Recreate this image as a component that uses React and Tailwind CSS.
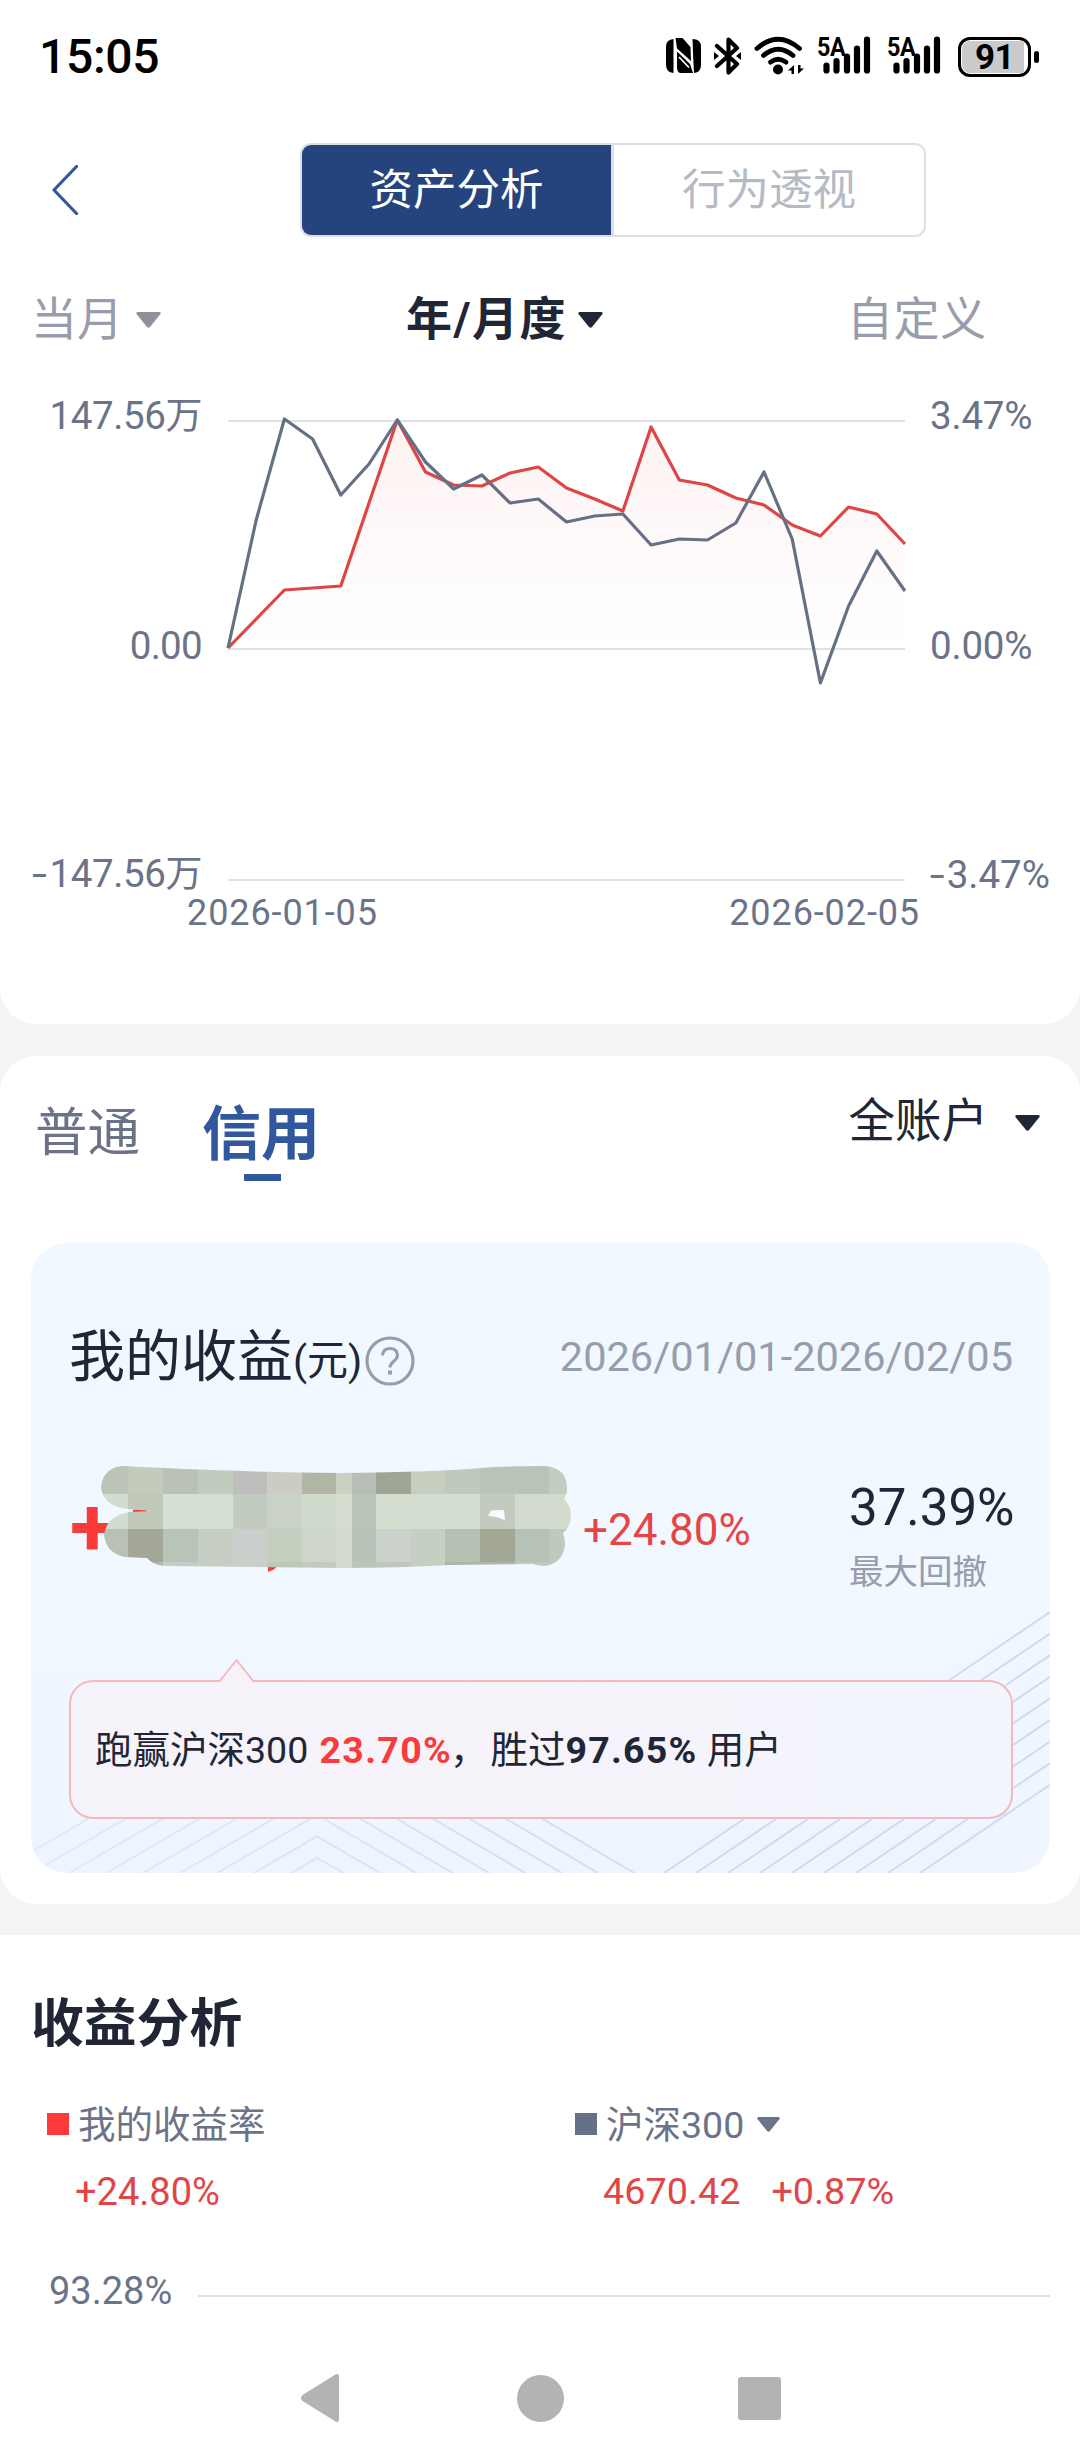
import React from 'react';

const STEP = 677 / 24;

const mine = [
  648, 619, 590, 588, 586, 503, 420, 472, 485, 486, 473, 467, 488, 499, 511, 427, 480, 485, 498, 505, 525, 536, 507,
  514, 544,
];

const index300 = [
  648, 520, 419, 439, 495, 464, 420, 462, 489, 475, 503, 499, 522, 516, 514, 545, 539, 540, 523, 472, 539, 683, 606,
  551, 591,
];

function toPoints(values) {
  return values.map((y, i) => `${(i * STEP).toFixed(1)},${y - 395}`).join(' ');
}

const mosaicCols = [99, 128, 162.5, 197.5, 232.5, 267, 302, 336, 352, 376, 411, 445, 480, 515, 549, 574];
const mosaicRows = [1462, 1493.5, 1528.5, 1562, 1572];
const mosaicColors = [
  ['#bbc4b7', '#c4cbbd', '#b9c2b5', '#c1ccbf', '#bcbfbb', '#cccbc4', '#b1b5a5', '#ccd0c1', '#b6beb6', '#9fa594', '#c6cec0', '#c0c9bd', '#bac3b7', '#b9c3b7', '#c3ccc0'],
  ['#d2ddd0', '#c0c8ba', '#d5dfd2', '#d5dfd2', '#c2cbbf', '#c9d2c4', '#d0dacd', '#d5ddd0', '#bac4b8', '#d3ddd0', '#d3ddd0', '#d2dfd2', '#c3cbbf', '#d3dbce', '#d3dbce'],
  ['#b8c1b4', '#a2a797', '#b7c4b7', '#c6cec3', '#cacfcb', '#c4cfbf', '#cdd6c9', '#d3dbd0', '#b8c2b6', '#cbd1cb', '#c6d0c2', '#b7c1b3', '#a3a896', '#b5c2b5', '#bfcabe'],
  ['#b8c1b4', '#b3b8aa', '#c6cec3', '#c6cec3', '#c9cfc4', '#bfc7b8', '#c3cbbe', '#d3dbd0', '#bcc5b9', '#bfc7bc', '#c6cec0', '#b0b6a6', '#b0b6a6', '#c0c9bd', '#bfcabe'],
];

function Caret({ className = '', width = 25, height = 16 }) {
  return (
    <svg className={className} width={width} height={height} viewBox="0 0 25 16" preserveAspectRatio="none">
      <path d="M1.5 0h22q2 .5 .8 2.3L14 15q-1.5 1.6-3 0L.7 2.3Q-.5 .5 1.5 0z" fill="currentColor" />
    </svg>
  );
}

function Signal() {
  return (
    <div className="relative h-[40px] w-[58px]">
      <div className="absolute top-[-1px] left-[2px] origin-left scale-x-[0.900] text-[26px] leading-[24px] font-bold tracking-[-0.500px]">
        5A
      </div>
      <svg width="58" height="40" viewBox="0 0 58 40">
        <path
          d="M11.500 29.500v5M21.500 25v9.500M32 20.500v14M42 12.500v22M52 3.500v31"
          stroke="#000"
          strokeWidth="6.2"
          strokeLinecap="round"
        />
      </svg>
    </div>
  );
}

function StatusBar() {
  return (
    <div className="flex h-[112px] items-center pl-[39px] text-black">
      <div className="w-[627px] pt-[2px] text-[48px] leading-none font-medium tracking-[-0.300px]">15:05</div>

      <svg width="35" height="36" viewBox="0 0 35 36">
        <path d="M7.500 1v34Q0 34 0 27V8Q0 2 7.500 1zM9.500 0h7l8 9 .5 14L11 10.500zM26.500 1Q35 1 35 9v18q0 7-7 8-1-17-1.500-34zM11 13.500l13 12.500 3 9H14q-3-1-3-6z" fill="#000" />
        <path d="M13 19l10 10.500" stroke="#fff" strokeWidth="1.800" />
      </svg>

      <svg className="ml-[13px]" width="27" height="38" viewBox="0 0 27 38">
        <path d="M3 9l20 18-8.500 8.500V2.500L23 11 3 29" fill="none" stroke="#000" strokeWidth="4.200" strokeLinejoin="round" strokeLinecap="round" />
        <path d="M0 15l5 4-5 4zM27 15l-5 4 5 4z" fill="#000" />
      </svg>

      <svg className="ml-[13px]" width="50" height="40" viewBox="0 0 50 40">
        <g fill="none" stroke="#000" strokeWidth="4.800" strokeLinecap="round">
          <path d="M3 12.500q21-18.500 42.500 0" />
          <path d="M9.500 19.500q14.500-12.500 29.500 0" />
          <path d="M16.500 26.200q7.500-6 15.500 0" />
        </g>
        <circle cx="24" cy="33.500" r="5" fill="#000" />
        <path d="M34 34.500l6-5.500v9h-2.500v-3.500zM50 32.500L44 38v-9h2.500v3.500z" fill="#000" />
      </svg>

      <div className="ml-[11px] flex gap-[12px]">
        <Signal />
        <Signal />
      </div>

      <div className="ml-[15px] flex items-center pt-[2px]">
        <div className="flex h-[40px] w-[73px] rounded-[12px] border-[3.5px] border-black p-px">
          <div className="flex w-[62px] items-center justify-center rounded-l-[8px] bg-[#cbcbcb] pl-[3px] text-[35px] leading-none font-bold tracking-[-0.500px]">
            91
          </div>
        </div>
        <div className="ml-[3px] h-[12px] w-[5px] rounded-full bg-black" />
      </div>
    </div>
  );
}

function Header() {
  return (
    <div className="flex h-[155px] items-center pl-[52px]">
      <svg width="26" height="50" viewBox="0 0 26 50">
        <path d="M24.500 1.500L2 25l22.500 23.500" fill="none" stroke="#31589f" strokeWidth="3.200" strokeLinecap="round" strokeLinejoin="round" />
      </svg>
      <div className="ml-[222px] flex h-[94px] w-[626px] overflow-hidden rounded-[11px] border-2 border-[#dcdfe6] text-[43.5px] leading-none">
        <div className="flex w-[309px] items-center justify-center bg-[#25437c] pt-[2px] text-white">资产分析</div>
        <div className="flex flex-1 items-center justify-center border-l-3 border-[#dcdfe6] pt-[2px] text-[#b6bac5]">行为透视</div>
      </div>
    </div>
  );
}

function FilterRow() {
  return (
    <div className="flex h-[104px] items-center pl-[31px] text-[46px] leading-none text-[#979dac]">
      <div className="w-[93px]">当月</div>
      <Caret className="mt-[2px] ml-[12px] text-[#8f929b]" />
      <div className="ml-[245px] w-[163px] font-bold tracking-[1.500px] text-[#212637]">年/月度</div>
      <Caret className="mt-[2px] ml-[9px] text-[#212637]" />
      <div className="ml-[244px] tracking-[0.600px]">自定义</div>
    </div>
  );
}

function TrendChart() {
  return (
    <div className="mt-[24px] text-[#6b7388]">
      <div className="flex h-[499px] text-[38.500px] leading-[42px]">
        <div className="flex w-[202px] flex-col justify-between text-right whitespace-nowrap">
          <div className="tracking-[-0.400px]">147.56<span className="text-[37px]">万</span></div>
          <div className="tracking-[-0.700px]">0.00</div>
          <div className="-mb-[2px] tracking-[-0.400px]"><span className="mr-[5px] inline-block scale-x-[1.400]">-</span>147.56<span className="text-[37px]">万</span></div>
        </div>
        <svg className="ml-[26px] overflow-visible" width="677" height="499" viewBox="0 0 677 499">
          <defs>
            <linearGradient id="area" x1="0" y1="0" x2="0" y2="1">
              <stop offset="0" stopColor="#e94848" stopOpacity="0.07" />
              <stop offset="1" stopColor="#e94848" stopOpacity="0" />
            </linearGradient>
          </defs>
          <path d="M0 26h677M0 254h677M0 485h677" stroke="#dfe2e4" strokeWidth="2" />
          <polygon points={`${toPoints(mine)} 677,253 0,253`} fill="url(#area)" />
          <polyline points={toPoints(mine)} fill="none" stroke="#df4545" strokeWidth="3.200" strokeLinejoin="round" />
          <polyline points={toPoints(index300)} fill="none" stroke="#667085" strokeWidth="3.200" strokeLinejoin="round" />
        </svg>
        <div className="ml-[25px] flex flex-col justify-between whitespace-nowrap">
          <div className="tracking-[-0.200px]">3.47%</div>
          <div className="tracking-[-0.200px]">0.00%</div>
          <div className="-mb-[2px]"><span className="mr-[4px] ml-[2px] inline-block scale-x-[1.400]">-</span>3.47%</div>
        </div>
      </div>
      <div className="flex justify-between pr-[160px] pl-[187px] text-[36px] leading-[38px] tracking-[0.900px]">
        <div>2026-01-05</div>
        <div>2026-02-05</div>
      </div>
    </div>
  );
}

function CardPattern() {
  return (
    <svg className="absolute inset-0" width="1019" height="630" viewBox="31 1243 1019 630" fill="none">
      <defs>
        <linearGradient id="chevron" gradientUnits="userSpaceOnUse" x1="31" y1="0" x2="640" y2="0">
          <stop offset="0" stopColor="#e0eaf8" />
          <stop offset="0.5" stopColor="#d8e5f7" />
          <stop offset="1" stopColor="#cbdff6" />
        </linearGradient>
      </defs>
      {Array.from({ length: 9 }, (_, k) => (
        <path
          key={k}
          d={`M${291 - 37 * k} 1873L317 ${1858 - 21.5 * k}L${344 + 36.3 * k} 1873`}
          stroke="url(#chevron)"
          strokeWidth="2"
        />
      ))}
      {Array.from({ length: 9 }, (_, k) => (
        <path key={k} d={`M1050 ${1612 + 21.6 * k}L${664 + 32 * k} 1873`} stroke="#c8dcf5" strokeWidth="2" />
      ))}
    </svg>
  );
}

// censored amount
function HiddenAmount() {
  return (
    <div className="relative h-[140px] w-[512px]">
      <div className="pt-[26px] pl-px text-[82px] leading-none font-bold text-[#fb3a3a]">+</div>
      <svg className="absolute top-0 left-0" width="511" height="120" viewBox="69 1460 511 120">
        <defs>
          <clipPath id="smear">
            <path d="M122 1466Q230 1472 340 1473Q440 1472 480 1468Q510 1466 545 1466Q567 1468 567 1488Q567 1495 564 1499Q571 1506 571 1515Q571 1527 563 1533Q565 1538 565 1545Q563 1563 545 1566Q538 1566 533 1564L450 1565Q400 1568 340 1568L165 1566Q153 1565 147 1558L125 1557Q106 1553 104 1535Q106 1516 130 1512L152 1511L127 1509Q103 1506 101 1487Q103 1468 122 1466z" />
          </clipPath>
        </defs>
        <path d="M133 1509.500h14v2.500h-14zM268 1566h9l-3 3.500-6 2.500z" fill="#f23c3c" />
        <g clipPath="url(#smear)" shapeRendering="crispEdges">
          {mosaicColors.map((row, r) =>
            row.map((fill, c) => (
              <rect
                key={`${r}-${c}`}
                x={mosaicCols[c]}
                y={mosaicRows[r]}
                width={mosaicCols[c + 1] - mosaicCols[c] + 0.5}
                height={mosaicRows[r + 1] - mosaicRows[r] + 0.5}
                fill={fill}
              />
            ))
          )}
        </g>
        <path d="M491 1510.500l13-.500 1 10.500q-6-4-17-4.500z" fill="#f8fcff" />
      </svg>
    </div>
  );
}

function IncomeCard() {
  return (
    <div className="relative ml-[31px] h-[630px] w-[1019px] overflow-hidden rounded-[36px] bg-gradient-to-b from-[#f2f8ff] via-[#f1f8ff] to-[#eef5ff]">
      <CardPattern />

      <div className="relative pr-[37px] pl-[38px]">
        <div className="mt-[70px] flex h-[84px] items-center justify-between">
          <div className="flex items-center leading-none text-[#212637]">
            <span className="mt-[3px] text-[56px]">我的收益</span>
            <span className="mt-[13px] text-[41px]">(元)</span>
            <svg className="mt-[12px] ml-[3px]" width="50" height="50" viewBox="0 0 50 50" fill="none" stroke="#979dac">
              <circle cx="25" cy="25" r="23" strokeWidth="3.200" />
              <path d="M17.500 19.500q.5-7 7.500-7t7.500 6.500q0 3.500-4 6.500-3.500 3-3.500 6" strokeWidth="3" />
              <path d="M25 34.500v4" strokeWidth="4" />
            </svg>
          </div>
          <div className="mt-[3px] text-[41.500px] leading-none text-[#979dac]">2026/01/01-2026/02/05</div>
        </div>

        <div className="mt-[63px] flex h-[140px]">
          <HiddenAmount />
          <div className="mt-[48px] ml-[2px] text-[44px] leading-none text-[#e54545]">+24.80%</div>
          <div className="ml-auto w-[164px] whitespace-nowrap">
            <div className="mt-[22px] text-[51px] leading-none text-[#212637]">37.39%</div>
            <div className="mt-[22px] text-[34.500px] leading-none text-[#979dac]">最大回撤</div>
          </div>
        </div>

        <div className="relative mt-[80px] flex h-[139px] w-[944px] items-center rounded-[24px] border-2 border-[#f5b8bc] bg-gradient-to-r from-[#f6f2f9] via-[#f6f3f9] to-[#f1f6fe] pt-[2px] pl-[24px] text-[37.500px] leading-none whitespace-pre text-[#212637]">
          <svg className="absolute -top-[24px] left-[147px]" width="38" height="25" viewBox="0 0 38 25">
            <path d="M1 24L18.500 2 36 24v1H1z" fill="#f6f2f9" />
            <path d="M1 24L18.500 2 36 24" fill="none" stroke="#f5b8bc" strokeWidth="2" strokeLinejoin="round" />
          </svg>
          <span>跑赢沪深300 </span>
          <span className="ml-[2px] font-bold tracking-[1.300px] text-[#f83c3c]">23.70%</span>
          <span className="-ml-[2px]">，</span>
          <span className="ml-[3px]">胜过</span>
          <span className="font-bold tracking-[1.200px]">97.65%</span>
          <span> 用户</span>
        </div>
      </div>
    </div>
  );
}

function AccountSection() {
  return (
    <div className="mt-[32px] h-[848px] rounded-[36px] bg-white">
      <div className="flex h-[187px] leading-none">
        <div className="mt-[51px] ml-[35px] text-[52.500px] text-[#6b7388]">普通</div>
        <div className="mt-[49px] ml-[62px] flex flex-col items-center">
          <div className="text-[59px] font-bold text-[#31589f]">信用</div>
          <div className="mt-[10px] ml-[2px] h-[7px] w-[37px] bg-[#31589f]" />
        </div>
        <div className="mt-[42px] mr-[40px] ml-auto flex h-[46px] items-center text-[46.500px] text-[#212637]">
          全账户
          <Caret className="mt-[3px] ml-[27px]" />
        </div>
      </div>
      <IncomeCard />
    </div>
  );
}

function AnalysisSection() {
  return (
    <div className="mt-[31px] h-[509px] bg-white">
      <div className="flex h-[176px] items-center pt-[3px] pl-[31px] text-[52.800px] leading-none font-bold text-[#212637]">
        收益分析
      </div>

      <div className="flex text-[38px] leading-[40px] text-[#6b7388]">
        <div className="w-[528px] pl-[47px]">
          <div className="-mt-[6px] flex items-center">
            <div className="mt-[-3px] h-[22px] w-[22px] bg-[#fd3b3b]" />
            <div className="ml-[9px] text-[37.500px]">我的收益率</div>
          </div>
          <div className="mt-[27px] pl-[28px] text-[#e04646]">+24.80%</div>
        </div>
        <div className="pl-[47px]">
          <div className="-mt-[6px] flex items-center">
            <div className="mt-[-3px] h-[22px] w-[22px] bg-[#667088]" />
            <div className="ml-[9px] text-[37.500px]">沪深300</div>
            <Caret className="mt-[-2px] ml-[13px]" width={23} height={15} />
          </div>
          <div className="mt-[26px] flex pl-[28px] text-[37.800px] text-[#e04646]">
            <div>4670.42</div>
            <div className="ml-[31px]">+0.87%</div>
          </div>
        </div>
      </div>

      <div className="mt-[59px] flex items-center pl-[49px] text-[38px] leading-[40px] text-[#6b7388]">
        <div className="w-[149px]">93.28%</div>
        <div className="mt-[10px] h-[2px] w-[852px] bg-[#e0e1e3]" />
      </div>

      <div className="mt-[62px] flex h-[50px] items-center pl-[300px] text-[#b3b3b3]">
        <svg width="39" height="50" viewBox="0 0 39 50">
          <path d="M35.500 1.500Q39 0 39 3.500v43q0 3.500-3.500 2L2.500 28q-3-3 0-6z" fill="currentColor" />
        </svg>
        <div className="ml-[178px] h-[47px] w-[47px] rounded-full bg-[#b3b3b3]" />
        <div className="ml-[174px] h-[43px] w-[43px] rounded-[3px] bg-[#b3b3b3]" />
      </div>
    </div>
  );
}

export default function App() {
  return (
    <div className="h-[2444px] w-[1080px] overflow-hidden bg-[#f3f4f6] font-['Roboto','Noto_Sans_CJK_SC',sans-serif]">
      <div className="h-[1024px] rounded-b-[36px] bg-white">
        <StatusBar />
        <Header />
        <FilterRow />
        <TrendChart />
      </div>
      <AccountSection />
      <AnalysisSection />
    </div>
  );
}
